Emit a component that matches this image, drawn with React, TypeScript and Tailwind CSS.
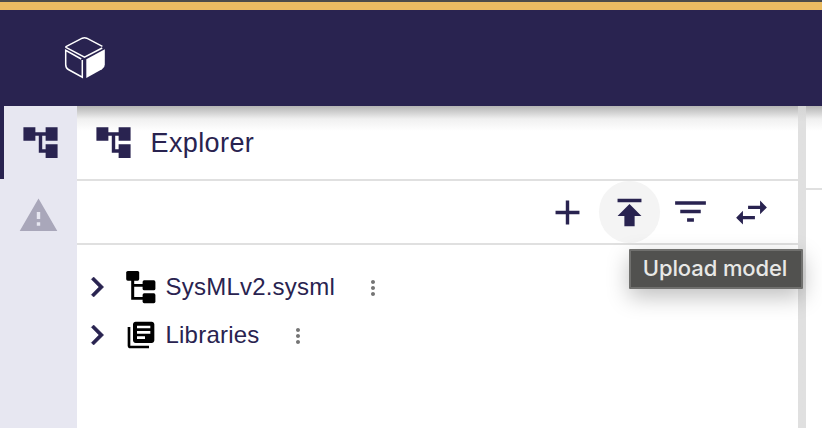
import React from "react";

const paths = {
  tree: "M22 11V3h-7v3H9V3H2v8h7V8h2v10h4v3h7v-8h-7v3h-2V8h2v3z",
  warning: "M1 21h22L12 2 1 21zm12-3h-2v-2h2v2zm0-4h-2v-4h2v4z",
  add: "M19 13h-6v6h-2v-6H5v-2h6V5h2v6h6v2z",
  publish: "M5 4v2h14V4H5zm0 10h4v6h6v-6h4l-7-7-7 7z",
  filter: "M10 18h4v-2h-4v2zM3 6v2h18V6H3zm3 7h12v-2H6v2z",
  swap: "M6.99 11L3 15l3.99 4v-3H14v-2H6.99v-3zM21 9l-3.99-4v3H10v2h7.01v3L21 9z",
  chevron: "M10 6 8.59 7.41 13.17 12l-4.58 4.59L10 18l6-6z",
  library:
    "M4 6H2v14c0 1.1.9 2 2 2h14v-2H4V6zm16-4H8c-1.1 0-2 .9-2 2v12c0 1.1.9 2 2 2h12c1.1 0 2-.9 2-2V4c0-1.1-.9-2-2-2zm-1 9H9V9h10v2zm-4 4H9v-2h6v2zm4-8H9V5h10v2z",
  more: "M12 8c1.1 0 2-.9 2-2s-.9-2-2-2-2 .9-2 2 .9 2 2 2zm0 2c-1.1 0-2 .9-2 2s.9 2 2 2 2-.9 2-2-.9-2-2-2zm0 6c-1.1 0-2 .9-2 2s.9 2 2 2 2-.9 2-2-.9-2-2-2z",
};

function Icon({ name, className }: { name: keyof typeof paths; className: string }) {
  return (
    <svg viewBox="0 0 24 24" fill="currentColor" className={`shrink-0 ${className}`}>
      <path d={paths[name]} />
    </svg>
  );
}

function Logo() {
  return (
    <svg viewBox="64 36 42 43" className="mb-[2px] h-[43px] w-[42px]" fill="none" stroke="white" strokeWidth="1.5">
      <path d="M102.2 48 84.5 57.2 66.4 47.7Q65.2 47 66.4 46.3L82.3 38.2Q84.5 37.2 86.7 38.2L102.4 46.3" />
      <path d="M81.2 59 65.7 50.3V64.5Q65.7 68 68.3 69.5L82.3 77.2V60" />
      <path d="M86.3 59.3 104.8 49.3V64.5Q104.8 67.7 102 69.3L86.3 78Z" fill="white" stroke="none" />
    </svg>
  );
}

function ModelIcon() {
  return (
    <svg viewBox="126 271 30 33" className="h-[33px] w-[30px] shrink-0" fill="black">
      <rect x="126.2" y="271" width="13" height="9.7" rx="1.6" />
      <rect x="142.6" y="280.3" width="12.8" height="10" rx="1.6" />
      <rect x="142.6" y="293.3" width="12.8" height="9.9" rx="1.6" />
      <path d="M131.2 280h3v4h9v2.7h-9V297h9v2.8h-12z" />
    </svg>
  );
}

function TreeRow({ label, icon, more }: { label: string; icon: React.ReactNode; more: string }) {
  return (
    <div className="flex h-12 items-center">
      <Icon name="chevron" className="h-10 w-10 stroke-current stroke-[0.3]" />
      <div className="ml-2 flex w-8 justify-center">{icon}</div>
      <span className="ml-[8.5px] text-[24px] leading-[32px] tracking-[0.22px]">{label}</span>
      <Icon name="more" className={`relative top-[1px] h-6 w-6 text-[#757575] ${more}`} />
    </div>
  );
}

export default function App() {
  return (
    <div className="relative flex h-[428px] w-[822px] flex-col overflow-hidden bg-white font-['Liberation_Sans',Arial,sans-serif] text-[#292350]">
      <div className="h-[2px] shrink-0 bg-[#4a4a4a]" />
      <div className="h-2 shrink-0 bg-[#eabb62]" />
      <header className="flex h-24 shrink-0 items-center bg-[#292350] pl-16">
        <Logo />
      </header>
      <div className="flex min-h-0 flex-1">
        <nav className="flex w-[77px] shrink-0 flex-col bg-[#e7e7f1]">
          <div className="flex h-[73px] items-center justify-center border-l-4 border-[#292350]">
            <Icon name="tree" className="h-[41px] w-[41px]" />
          </div>
          <div className="flex h-[73px] items-center justify-center pb-[1px] text-[#a9a7ba]">
            <Icon name="warning" className="h-[41px] w-[41px]" />
          </div>
        </nav>
        <main className="flex w-[721px] shrink-0 flex-col">
          <div className="flex h-[75px] items-center border-b-2 border-[#e0e0e0] bg-linear-to-b from-[#b4b4b4] via-[#f0f0f0] via-[13px] to-white to-[25px] pl-4">
            <Icon name="tree" className="h-[41px] w-[41px]" />
            <h1 className="ml-[16.5px] pt-[2px] text-[27px] tracking-[0.4px]">Explorer</h1>
          </div>
          <div className="flex h-16 shrink-0 items-center justify-end border-b-2 border-[#e0e0e0] pr-4">
            <button className="flex h-[61px] w-[61px] items-center justify-center">
              <Icon name="add" className="h-[41px] w-[41px]" />
            </button>
            <button className="ml-px flex h-[62px] w-[61px] items-center justify-center rounded-full bg-[#f4f4f4]">
              <Icon name="publish" className="h-[41px] w-[41px]" />
            </button>
            <button className="flex h-[61px] w-[61px] items-center justify-center pb-[2px]">
              <Icon name="filter" className="h-[41px] w-[41px]" />
            </button>
            <button className="flex h-[61px] w-[61px] items-center justify-center">
              <Icon name="swap" className="h-[41px] w-[41px]" />
            </button>
          </div>
          <div className="pt-[18px]">
            <TreeRow label="SysMLv2.sysml" icon={<ModelIcon />} more="ml-[25.5px]" />
            <TreeRow
              label="Libraries"
              icon={<Icon name="library" className="h-8 w-8 text-black" />}
              more="ml-[26.3px]"
            />
          </div>
        </main>
        <div className="w-2 shrink-0 bg-linear-to-b from-[#d3d3d3] to-[#e0e0e0] to-[16px]" />
        <section className="flex-1">
          <div className="h-[84px] border-b-2 border-[#e0e0e0] bg-linear-to-b from-[#b4b4b4] via-[#f0f0f0] via-[13px] to-white to-[25px]" />
        </section>
      </div>
      <div className="absolute left-[629px] top-[249px] flex h-[40px] w-[174px] items-center justify-center rounded-[1px] border-2 border-[#70706e] bg-[#51514f] pb-[1px] pr-[2px] font-['Inter',sans-serif] text-[22px] font-medium tracking-[-0.1px] text-[#e8e8e6] shadow-[0_8px_22px_rgba(0,0,0,0.25)]">
        <span className="whitespace-nowrap">Upload model</span>
      </div>
    </div>
  );
}
